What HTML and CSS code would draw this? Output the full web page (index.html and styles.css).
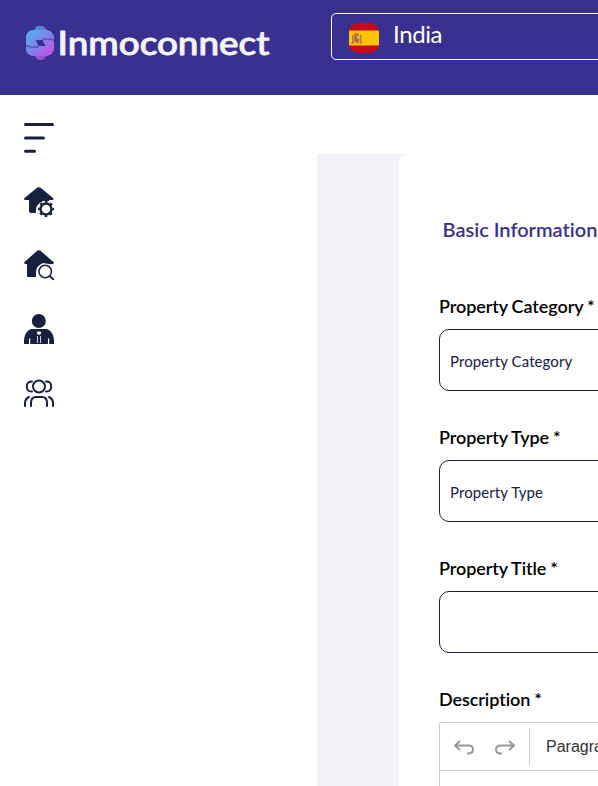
FILE: index.html
```html
<!DOCTYPE html>
<html lang="en">
<head>
<meta charset="utf-8">
<title>Inmoconnect</title>
<link rel="stylesheet" href="styles.css">
</head>
<body>
<header class="topbar">
  <svg class="logo" width="250" height="44" viewBox="0 0 250 44" role="img" aria-label="Inmoconnect">
    <defs><linearGradient id="brand" gradientUnits="userSpaceOnUse" x1="4" y1="8" x2="28" y2="36"><stop offset="0" stop-color="#4eb5e9"/><stop offset=".5" stop-color="#7f83e8"/><stop offset=".85" stop-color="#ba59ea"/></linearGradient></defs>
    <path fill="url(#brand)" opacity=".75" d="M10 9 12 6Q13 5 15 5H17Q19 5 20 6L23 9ZM10 34 13 38Q14 39 16 39H17Q19 39 20 38L23 34Z"/>
    <path fill="url(#brand)" d="M9 9H23Q26 9 28 12L30 15V29Q28 34 23 35H9Q5 35 2 30V15Q4 9 9 9Z"/>
    <path fill="#39318f" d="M11.500 19H18.500L21.500 25H14.500Z"/>
    <path d="M2 24.500Q4 26 8 26H14.500M30 19.500Q28 18 24 18H18.500" fill="none" stroke="#39318f" stroke-width=".9"/>
    <text class="wordmark" x="33.500" y="33.800" textLength="212" lengthAdjust="spacingAndGlyphs">Inmoconnect</text>
  </svg>
  <div class="country">
    <svg class="flag" width="30" height="30" viewBox="0 0 30 30">
      <defs><clipPath id="round"><rect width="30" height="30" rx="9"/></clipPath></defs>
      <g clip-path="url(#round)"><path fill="#c60b1e" d="M0 0h30v30H0z"/><path fill="#ffc400" d="M0 7.5h30v15H0z"/>
      <path fill="#bd7a2a" d="M3 12h1.500v8H3zM11 12h1.500v8H11zM5 12l1-2h3l1 2v1H5z"/><path fill="#b96b52" d="M5 13h5.500v5q-2.700 4-5.500 0z"/><path fill="#d6b8a0" d="M8 13h2.500v3H8z"/><path fill="#8c7460" d="M7 15h2v3H7zM2 19.500h3v1H2zM10.500 19.500h3v1h-3z"/></g>
    </svg>
    <span>India</span>
  </div>
</header>
<div class="page">
  <nav class="sidebar">
    <svg viewBox="0 0 30 30"><path class="line menu" d="M1.5 1.5h27M1.500 15h18M1.500 28.300h9"/></svg>
    <svg viewBox="0 0 30 30"><path class="solid" d="M13.400.5Q15-.3 16.600.8L29 11q1.500 1.800-1 2H25V14H19Q12.500 17 12 22V25Q12 26 11 26H7Q5 26 5 24V13H1.500Q-1 12.500.5 11Z"/><circle cx="22" cy="22" r="7.400" fill="#fff"/><circle cx="22" cy="22" r="5.500" class="line" stroke-width="2.400"/><circle cx="22" cy="22" r="7.200" class="line" stroke-width="1.800" stroke-dasharray="2.600 3.055" stroke-dashoffset="1.300"/></svg>
    <svg viewBox="0 0 30 30"><path class="solid" d="M13.500.5Q15-.3 16.500.8L29.500 12q1 1.500-1 2H25L19 13Q12 16 12 22V27H4Q3 27 3 26V14H1Q-.5 13 .5 12Z"/><circle cx="21.200" cy="21.500" r="7.200" fill="#fff"/><circle cx="21.200" cy="21.500" r="6.200" class="line" stroke-width="1.500"/><path class="line" stroke-width="1.800" d="m25.800 26 3.500 3.300"/></svg>
    <svg viewBox="0 0 30 30"><circle class="solid" cx="14.800" cy="7" r="7"/><path class="solid" d="M0 30v-4Q1 17 7 15H23Q29 17 30 26v4Z"/><path fill="#fff" d="m13.500 17.500 3 0 .8 1.500-1.300 1.800h-2L12.700 19ZM13.200 22h.8v7h-.8ZM16 22h.8v7H16ZM5 24.500h1.200V30H5ZM24 24.500h1.200V30H24Z"/></svg>
    <svg viewBox="0 0 30 30"><g class="line" stroke-width="2"><circle cx="15" cy="8.500" r="6"/><path d="M8 3.500Q2.800 3.300 2.800 8.500t5.200 5M22 3.500q5.200-.2 5.200 5t-5.200 5M7 28v-3Q7 19 12 19h6q5 0 5 6v3M1 28v-3q0-4 4-6M29 28v-3q0-4-4-6"/></g></svg>
  </nav>
  <main class="content">
    <section class="card">
      <h1>Basic Information</h1>
      <div class="field"><label>Property Category *</label><div class="box">Property Category</div></div>
      <div class="field"><label>Property Type *</label><div class="box">Property Type</div></div>
      <div class="field"><label>Property Title *</label><div class="box"></div></div>
      <div class="field"><label>Description *</label>
        <div class="editor"><div class="toolbar">
          <svg width="20" height="16" viewBox="0 0 20 16"><path d="M6 1 1 5.500 6 10M1 5.500h13q5 0 5 4t-5 4h-1"/></svg>
          <svg width="20" height="16" viewBox="0 0 20 16"><path d="m14 1 5 4.500-5 4.500M19 5.500H6q-5 0-5 4t5 4h1"/></svg>
          <span class="style">Paragraph</span>
        </div></div>
      </div>
    </section>
  </main>
</div>
</body>
</html>
```
FILE: styles.css
```css
* { box-sizing: border-box; }
body { margin: 0; height: 786px; overflow: hidden; background: #fff; font-family: Lato, sans-serif; font-variant-ligatures: none; }
.topbar { height: 95px; background: #39318f; display: flex; align-items: flex-start; overflow: hidden; }
.logo { margin: 21px 57px 0 24px; flex: none; }
.wordmark { font: 500 33px Lato, sans-serif; fill: #f5f4fa; stroke: #f5f4fa; stroke-width: .9; stroke-linejoin: round; }
.country { margin-top: 13px; width: 330px; height: 47px; flex: none; border: 1px solid #fff; border-radius: 5px; padding: 2px 17px 0; display: flex; align-items: center; gap: 14px; color: #fff; font-size: 24px; letter-spacing: -.4px; }
.country span { margin-top: -8px; }
.flag { flex: none; }
.page { display: flex; height: 691px; }
.sidebar { width: 317px; flex: none; padding: 28px 24px; display: flex; flex-direction: column; gap: 33.7px; }
.sidebar svg { width: 30px; height: 30px; flex: none; overflow: visible; }
.solid { fill: #17203d; }
.line { fill: none; stroke: #17203d; stroke-linecap: round; }
circle.line { stroke-linecap: butt; }
.menu { stroke-width: 3; }
.content { margin-top: 59px; flex: 1; min-width: 0; background: #f2f3f6; padding-left: 82px; overflow: hidden; }
.card { width: 500px; height: 700px; background: #fff; border-radius: 10px; padding: 61px 40px 0; }
h1 { margin: 0 0 51px 3.5px; font-size: 20px; line-height: 28px; font-weight: 600; color: #39318f; white-space: nowrap; }
.field { margin-bottom: 34px; }
label { display: block; height: 24px; margin-bottom: 11px; font-size: 18px; line-height: 24px; font-weight: 600; letter-spacing: -.08px; word-spacing: -.5px; color: #000; white-space: nowrap; }
.box { height: 62px; border: 1px solid #17203d; border-radius: 10px; padding: 2px 10px 0; display: flex; align-items: center; font-size: 15px; letter-spacing: .08px; color: #17203d; }
.editor { height: 100px; border: 1px solid #ccc; border-radius: 2px 2px 0 0; }
.toolbar { height: 48px; border-bottom: 1px solid #ccc; display: flex; align-items: center; padding-left: 14px; gap: 21px; }
.toolbar svg { fill: none; stroke: #999; stroke-width: 2; flex: none; margin-top: 2px; }
.style { height: 37px; margin-left: -7px; border-left: 1px solid #ccc; padding-left: 16px; line-height: 37px; font-family: "Liberation Sans", sans-serif; font-size: 16px; color: #333; }
```
